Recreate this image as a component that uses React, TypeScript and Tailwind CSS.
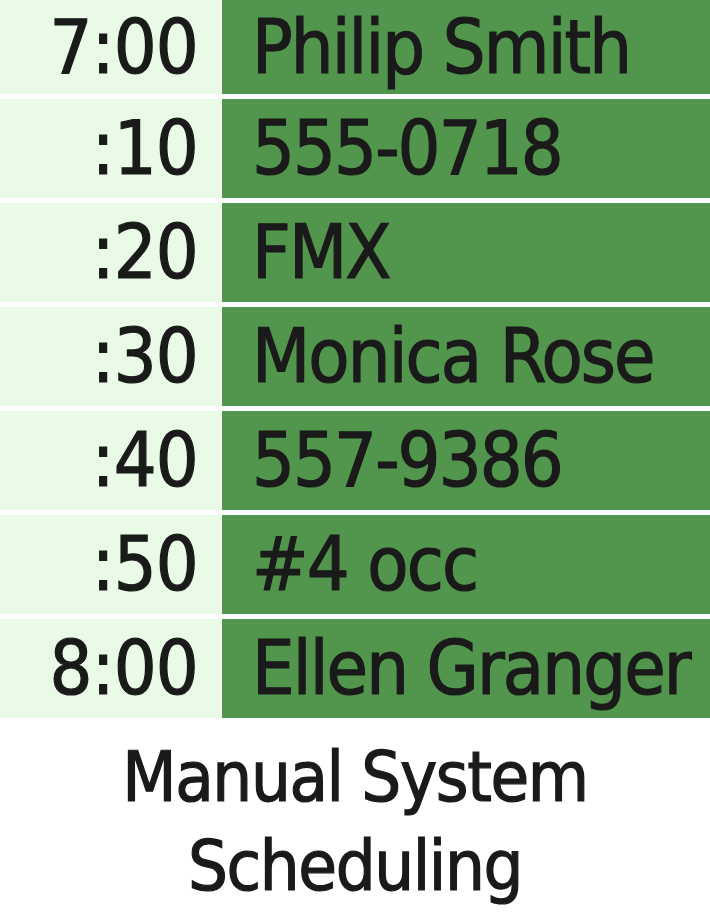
const ROWS = [
  { time: '7:00', text: 'Philip Smith' },
  { time: ':10', text: '555-0718' },
  { time: ':20', text: 'FMX' },
  { time: ':30', text: 'Monica Rose' },
  { time: ':40', text: '557-9386' },
  { time: ':50', text: '#4 occ' },
  { time: '8:00', text: 'Ellen Granger' },
];

const font = "font-['Liberation_Sans_Narrow','DejaVu_Sans_Condensed','Liberation_Sans',sans-serif]";

export default function App() {
  return (
    <div className={`w-[710px] h-[914px] bg-white overflow-hidden text-[#1a1a1a] [-webkit-text-stroke:1.2px_#1a1a1a] ${font}`}>
      <div className="flex flex-col gap-[5px]">
        {ROWS.map((row, i) => (
          <div key={row.time} className={`flex ${i === 0 ? 'h-[94px]' : 'h-[99px]'}`}>
            <div className="w-[220px] shrink-0 bg-[#e9fbe7] flex items-center justify-end pr-[22px] text-[75px] tracking-[-0.01em] leading-none whitespace-nowrap">
              {row.time}
            </div>
            <div className="w-[2px] shrink-0 bg-[#f3fdf1]" />
            <div className="flex-1 bg-[#52964d] flex items-center pl-[30px] text-[75px] tracking-[-0.025em] leading-none whitespace-nowrap">
              {row.text}
            </div>
          </div>
        ))}
      </div>
      <div className="pt-[15px] text-center text-[70px] leading-[89px] tracking-[-0.02em] whitespace-nowrap">
        <div>Manual System</div>
        <div>Scheduling</div>
      </div>
    </div>
  );
}
